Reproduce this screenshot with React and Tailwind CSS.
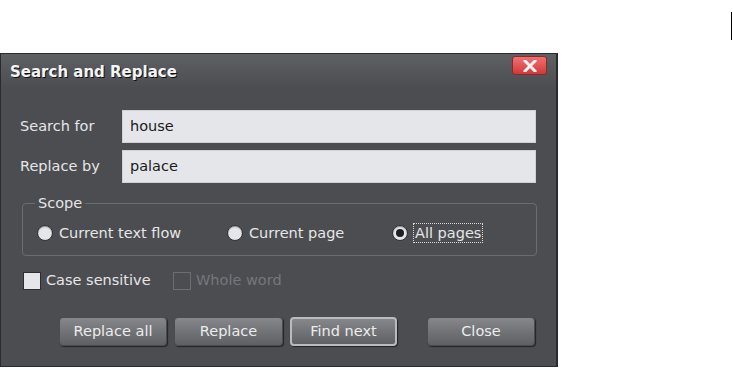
import React from 'react'

const font = { fontFamily: '"DejaVu Sans", Verdana, sans-serif' }

function Radio({ checked, label, focused }) {
  return (
    <label className="flex items-center gap-[6px]">
      <span className="w-[16px] h-[16px] rounded-full bg-[#e4e6ea] border border-[#2c2d30] shadow-[inset_0_1px_1px_rgba(0,0,0,0.35)] flex items-center justify-center">
        {checked && <span className="w-[8px] h-[8px] rounded-full bg-[#1e1f22]" />}
      </span>
      <span className={focused ? 'outline-1 outline-dotted outline-[#d8d8d8] px-[1px] leading-[18px]' : 'leading-[18px]'}>{label}</span>
    </label>
  )
}

function Button({ children, focused, className }) {
  return (
    <button
      type="button"
      className={
        'h-[29px] rounded-[4px] text-[#ececec] text-[14.5px] bg-gradient-to-b from-[#85878b] to-[#5e6064] shadow-[1px_1px_1px_rgba(0,0,0,0.55)] ' +
        (focused ? 'border-2 border-[#b9bbbf] ' : 'border border-[#4a4c50] ') +
        className
      }
    >
      {children}
    </button>
  )
}

export default function App() {
  return (
    <div className="relative w-[733px] h-[369px] bg-white overflow-hidden" style={font}>
      <div className="absolute left-[731px] top-[12px] w-[1px] h-[28px] bg-black" />
      <div className="pt-[53px]">
        <div className="w-[558px] h-[314px] bg-[#4b4d51] border border-[#2a2b2e] border-r-2 flex flex-col text-[#e6e6e6] text-[14.5px]">
          <div className="h-[34px] flex items-center justify-between pl-[9px] pr-[9px] pt-[3px] bg-gradient-to-b from-[#5e6064] to-[#4b4d51]">
            <span className="text-[15px] font-bold text-[#f4f4f4] [text-shadow:1px_1px_0_#111]">Search and Replace</span>
            <span className="w-[35px] h-[19px] mb-[14px] rounded-[3px] bg-gradient-to-b from-[#f07070] to-[#d03838] border border-[#8c2a2a] flex items-center justify-center">
              <svg width="14" height="12" viewBox="0 0 14 12">
                <path d="M2 1 L12 11 M12 1 L2 11" stroke="#f2f2f2" strokeWidth="3" strokeLinecap="square" />
              </svg>
            </span>
          </div>
          <div className="flex flex-col px-[19px] pt-[22px]">
            <div className="flex items-center h-[33px]">
              <span className="w-[102px]">Search for</span>
              <div className="flex-1 h-[33px] bg-[#e4e6ea] border border-[#cfd1d5] text-[#1a1a1a] flex items-center pl-[7px] mr-[1px]">house</div>
            </div>
            <div className="flex items-center h-[33px] mt-[7px]">
              <span className="w-[102px]">Replace by</span>
              <div className="flex-1 h-[33px] bg-[#e4e6ea] border border-[#cfd1d5] text-[#1a1a1a] flex items-center pl-[7px] mr-[1px]">palace</div>
            </div>
            <fieldset className="mt-[12px] ml-[2px] mr-0 h-[61px] border border-[#6a6c70] rounded-[4px] px-[14px] pb-[8px]">
              <legend className="px-[3px] ml-[-2px] text-[14.5px] leading-[16px]">Scope</legend>
              <div className="flex items-center pt-[13px]">
                <div className="w-[190px]"><Radio label="Current text flow" /></div>
                <div className="w-[165px]"><Radio label="Current page" /></div>
                <Radio label="All pages" checked focused />
              </div>
            </fieldset>
            <div className="flex items-center mt-[15px] h-[20px] ml-[3px]">
              <span className="w-[18px] h-[18px] bg-[#e4e6ea] border border-[#2c2d30]" />
              <span className="ml-[5px] w-[127px]">Case sensitive</span>
              <span className="w-[18px] h-[18px] border border-[#6c6e72]" />
              <span className="ml-[5px] text-[#75777b]">Whole word</span>
            </div>
            <div className="flex items-center mt-[26px] ml-[39px]">
              <Button className="w-[108px]">Replace all</Button>
              <Button className="w-[109px] ml-[7px]">Replace</Button>
              <Button className="w-[107px] ml-[7px]" focused>Find next</Button>
              <Button className="w-[108px] ml-[30px]">Close</Button>
            </div>
          </div>
        </div>
      </div>
    </div>
  )
}
